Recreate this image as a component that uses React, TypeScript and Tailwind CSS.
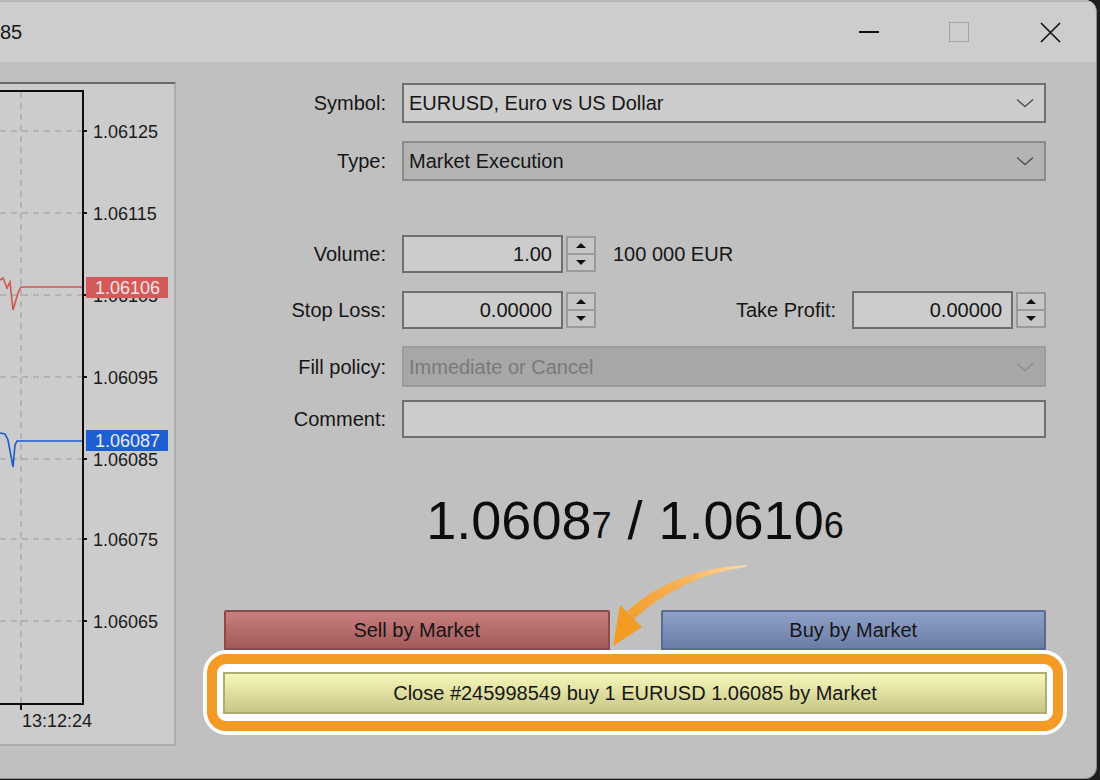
import React from 'react';

const font = { fontFamily: '"Liberation Sans", Arial, sans-serif' };

function Chevron({ color = '#505050' }: { color?: string }) {
  return (
    <svg width="18" height="10" viewBox="0 0 18 10" className="shrink-0">
      <path d="M1 1.5 L9 8.5 L17 1.5" fill="none" stroke={color} strokeWidth="1.4" />
    </svg>
  );
}

function Spinner() {
  return (
    <div className="ml-[3px] flex h-[36px] w-[30px] shrink-0 flex-col border-2 border-[#9a9a9a] bg-[#c6c6c6]">
      <div className="flex flex-1 items-center justify-center border-b-2 border-[#9a9a9a]">
        <svg width="10" height="5" viewBox="0 0 10 5"><path d="M0 5 L5 0 L10 5 Z" fill="#111" /></svg>
      </div>
      <div className="flex flex-1 items-center justify-center">
        <svg width="10" height="5" viewBox="0 0 10 5"><path d="M0 0 L5 5 L10 0 Z" fill="#111" /></svg>
      </div>
    </div>
  );
}

function Label({ children }: { children: React.ReactNode }) {
  return <div className="w-[226px] shrink-0 pr-[16px] text-right text-[20px] text-[#161616]">{children}</div>;
}

function NumberBox({ value }: { value: string }) {
  return (
    <div className="flex h-[38px] w-[161px] shrink-0 items-center justify-end border-2 border-[#6f6f6f] bg-[#cccccc] pr-[9px] text-[20px] text-[#161616]">
      {value}
    </div>
  );
}

const grid = [
  { y: 47, v: '1.06125' },
  { y: 129, v: '1.06115' },
  { y: 211, v: '1.06105' },
  { y: 293, v: '1.06095' },
  { y: 375, v: '1.06085' },
  { y: 455, v: '1.06075' },
  { y: 537, v: '1.06065' },
];

function Chart() {
  return (
    <div className="mt-[20px] h-[664px] w-[176px] shrink-0 border-t-2 border-r-2 border-b-2 border-t-[#6b6b6b] border-r-[#acacac] border-b-[#acacac] bg-[#cccccc]">
      <svg width="174" height="660" viewBox="0 0 174 660" style={font}>
        <line x1="21" y1="8" x2="21" y2="619" stroke="#b3b3b3" strokeWidth="2" strokeDasharray="6 5" />
        {grid.map((g) => (
          <g key={g.v}>
            <line x1="0" y1={g.y} x2="82" y2={g.y} stroke="#b3b3b3" strokeWidth="2" strokeDasharray="6 5" />
            <line x1="83" y1={g.y} x2="87" y2={g.y} stroke="#111" strokeWidth="2" />
            <text x="93" y={g.y + 7} fontSize="18" fill="#1a1a1a">{g.v}</text>
          </g>
        ))}
        <path d="M0 7 L83 7 L83 620 L0 620" fill="none" stroke="#0d0d0d" strokeWidth="2" />
        <line x1="21" y1="620" x2="21" y2="626" stroke="#111" strokeWidth="2" />
        <text x="22" y="643" fontSize="18" fill="#1a1a1a">13:12:24</text>
        <polyline points="0,196 3,194 7,204 10,198 13,226 18,209 21,203 82,203" fill="none" stroke="#d45454" strokeWidth="1.6" />
        <polyline points="0,349 5,350 8,356 13,383 15,361 17,357 82,357" fill="none" stroke="#1a5ad0" strokeWidth="1.6" />
        <rect x="86" y="193" width="82" height="21" fill="#d45a5a" />
        <text x="95" y="210" fontSize="18" fill="#f4e6e6">1.06106</text>
        <rect x="86" y="346" width="82" height="21" fill="#1d5fd2" />
        <text x="95" y="363" fontSize="18" fill="#e6ecfa">1.06087</text>
      </svg>
    </div>
  );
}

export default function App() {
  return (
    <div className="h-[780px] w-[1100px] overflow-hidden bg-[#1e1e1e]" style={font}>
      <div className="relative flex h-[779px] w-[1097px] flex-col overflow-hidden rounded-tr-[12px] rounded-br-[12px] border-r border-b border-[#8e8e8e] bg-[#c0c0c0]">
        <div className="flex h-[62px] shrink-0 items-center border-t-2 border-[#b6b6b6] bg-[#cdcdcd]">
          <span className="text-[20px] text-[#161616]">85</span>
          <div className="flex-1" />
          <div className="flex h-full w-[90px] items-center justify-center">
            <div className="h-[1.5px] w-[20px] bg-[#111]" />
          </div>
          <div className="flex h-full w-[90px] items-center justify-center">
            <div className="h-[20px] w-[20px] border-[1.5px] border-[#a2a2a2]" />
          </div>
          <div className="flex h-full w-[92px] items-center justify-center">
            <svg width="21" height="21" viewBox="0 0 21 21">
              <path d="M1 1 L20 20 M20 1 L1 20" stroke="#111" strokeWidth="1.6" />
            </svg>
          </div>
        </div>

        <div className="flex flex-1">
          <Chart />

          <div className="flex flex-1 flex-col pt-[21px] pr-[50px]">
            <div className="flex items-center">
              <Label>Symbol:</Label>
              <div className="flex h-[40px] flex-1 items-center justify-between border-2 border-[#6f6f6f] bg-[#cccccc] pr-[10px] pl-[5px] text-[20px] text-[#161616]">
                <span>EURUSD, Euro vs US Dollar</span>
                <Chevron />
              </div>
            </div>

            <div className="mt-[18px] flex items-center">
              <Label>Type:</Label>
              <div className="flex h-[40px] flex-1 items-center justify-between border-2 border-[#8a8a8a] bg-[#b4b4b4] pr-[10px] pl-[5px] text-[20px] text-[#161616]">
                <span>Market Execution</span>
                <Chevron />
              </div>
            </div>

            <div className="mt-[54px] flex items-center">
              <Label>Volume:</Label>
              <NumberBox value="1.00" />
              <Spinner />
              <span className="ml-[17px] text-[20px] text-[#161616]">100 000 EUR</span>
            </div>

            <div className="mt-[18px] flex items-center">
              <Label>Stop Loss:</Label>
              <NumberBox value="0.00000" />
              <Spinner />
              <div className="flex-1" />
              <span className="mr-[16px] text-[20px] text-[#161616]">Take Profit:</span>
              <NumberBox value="0.00000" />
              <Spinner />
            </div>

            <div className="mt-[17px] flex items-center">
              <Label>Fill policy:</Label>
              <div className="flex h-[41px] flex-1 items-center justify-between border-2 border-[#9d9d9d] bg-[#a7a7a7] pr-[10px] pl-[5px] text-[20px] text-[#7a7a7a]">
                <span>Immediate or Cancel</span>
                <Chevron color="#8e8e8e" />
              </div>
            </div>

            <div className="mt-[13px] flex items-center">
              <Label>Comment:</Label>
              <div className="h-[38px] flex-1 border-2 border-[#6f6f6f] bg-[#cccccc]" />
            </div>

            <div className="ml-[48px] flex flex-col">
              <div className="mt-[52px] flex h-[60px] items-center justify-center text-[54px] leading-none text-[#0d0d0d]">
                <span>1.0608</span>
                <span className="mt-[12px] text-[36px]">7</span>
                <span className="mx-[16px]">/</span>
                <span>1.0610</span>
                <span className="mt-[12px] text-[36px]">6</span>
              </div>

              <div className="mt-[60px] flex h-[40px] gap-[51px]">
                <div className="flex flex-1 items-center justify-center rounded-t-[2px] border-2 border-[#8b4b4b] bg-gradient-to-b from-[#c97f7f] to-[#a45a5a] text-[20px] text-[#161616]">
                  Sell by Market
                </div>
                <div className="flex flex-1 items-center justify-center rounded-t-[2px] border-2 border-[#5a6a92] bg-gradient-to-b from-[#8fa0c8] to-[#6c7ea8] text-[20px] text-[#161616]">
                  Buy by Market
                </div>
              </div>

              <div className="-mx-[21px] rounded-[24px] bg-white p-[4px]">
                <div className="rounded-[19px] border-[10px] border-[#f39b25] bg-white px-[6px] pt-[8px] pb-[7px]">
                  <div className="flex h-[42px] items-center justify-center border-2 border-[#aeac72] bg-gradient-to-b from-[#f7f7bb] to-[#c9c786] text-[20px] text-[#161616]">
                    Close #245998549 buy 1 EURUSD 1.06085 by Market
                  </div>
                </div>
              </div>
            </div>
          </div>
        </div>

        <svg className="pointer-events-none absolute top-0 left-0" width="1097" height="780" viewBox="0 0 1097 780">
          <defs>
            <linearGradient id="arr" x1="745" y1="566" x2="620" y2="640" gradientUnits="userSpaceOnUse">
              <stop offset="0" stopColor="#fbd9a8" />
              <stop offset="0.45" stopColor="#f5b052" />
              <stop offset="1" stopColor="#f39b25" />
            </linearGradient>
          </defs>
          <path d="M746 565 Q676 568 627 611 L634 619 Q682 576 746 567 Z" fill="url(#arr)" />
          <path d="M613 646 L620 605 L642 627 Z" fill="#f39b25" />
        </svg>
      </div>
    </div>
  );
}
